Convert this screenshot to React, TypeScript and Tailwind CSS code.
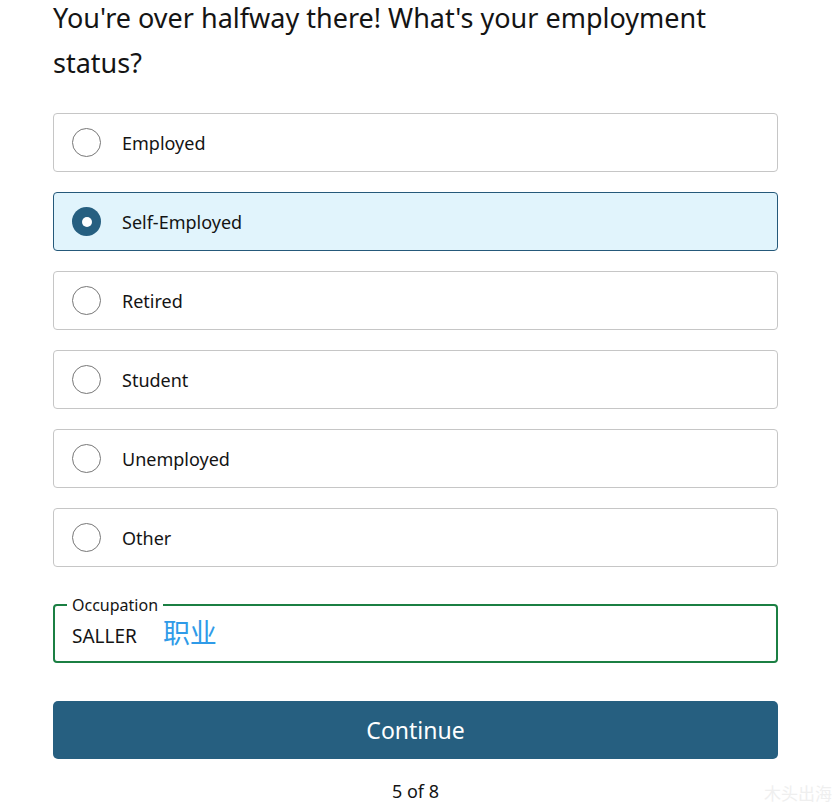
import React from "react";

const options = ["Employed", "Self-Employed", "Retired", "Student", "Unemployed", "Other"];

function Radio({ checked }: { checked: boolean }) {
  if (checked) {
    return (
      <span className="flex h-[29px] w-[29px] shrink-0 items-center justify-center rounded-full bg-[#265f80]">
        <span className="h-[10px] w-[10px] rounded-full bg-white" />
      </span>
    );
  }
  return <span className="h-[29px] w-[29px] shrink-0 rounded-full border-[1.5px] border-[#777777] bg-white" />;
}

export default function App() {
  const selected = "Self-Employed";
  return (
    <div className="relative h-[805px] w-[834px] overflow-hidden bg-white font-['Noto_Sans','Noto_Sans_CJK_SC',sans-serif] text-[#141414]">
      <div className="ml-[53px] w-[725px]">
        <h1 className="-mt-[5px] text-[27px] font-normal leading-[45px]">
          You're over halfway there! What's your employment
          <br />
          status?
        </h1>

        <div className="mt-[28px] flex flex-col gap-[20px]">
          {options.map((o) => {
            const on = o === selected;
            return (
              <label
                key={o}
                className={
                  on
                    ? "flex h-[59px] items-center gap-[21px] rounded-[4px] border border-[#25597a] bg-[#e1f4fc] pl-[18px]"
                    : "flex h-[59px] items-center gap-[21px] rounded-[4px] border border-[#c6c6c6] bg-white pl-[18px]"
                }
              >
                <Radio checked={on} />
                <span className="text-[18px] leading-[24px]">{o}</span>
              </label>
            );
          })}
        </div>

        <fieldset className="mt-[28px] rounded-[4px] border-2 border-[#1b7f43] pb-[14px] pl-[12px] pr-[12px]">
          <legend className="px-[5px] text-[16px] leading-[20px]">Occupation</legend>
          <div className="mt-[4px] flex h-[28px] items-baseline pl-[5px]">
            <span className="text-[19px] leading-[28px]">SALLER</span>
            <span className="ml-[26px] text-[27px] leading-[28px] text-[#2f9be8]">职业</span>
          </div>
        </fieldset>

        <button className="mt-[38px] flex h-[58px] w-full items-center justify-center rounded-[5px] bg-[#265f80] text-[23px] leading-[30px] text-white">
          Continue
        </button>

        <div className="mt-[20px] text-center text-[18px] leading-[24px]">5 of 8</div>
      </div>

      <div className="absolute bottom-[1px] right-[2px] text-[17px] leading-[20px] text-[#efefef]">木头出海</div>
    </div>
  );
}
